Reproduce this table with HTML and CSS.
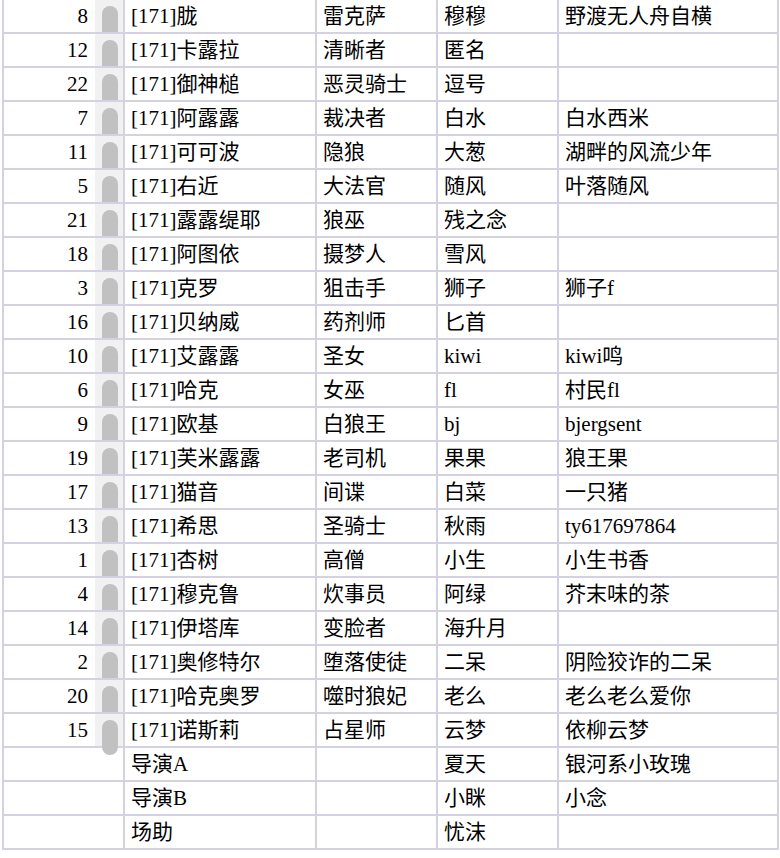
FILE: index.html
```html
<!DOCTYPE html>
<html>
<head>
<meta charset="utf-8">
<title>名单</title>
<link rel="stylesheet" href="styles.css">
</head>
<body>
<table class="roster">
  <colgroup>
    <col class="c-no"><col class="c-name"><col class="c-role"><col class="c-nick"><col class="c-note">
  </colgroup>
  <tbody>
    <tr><td class="no"><div class="no-wrap"><span class="num">8</span><span class="track"><span class="thumb"></span></span></div></td><td><span class="tag">[171]</span>胧</td><td>雷克萨</td><td>穆穆</td><td>野渡无人舟自横</td></tr>
    <tr><td class="no"><div class="no-wrap"><span class="num">12</span><span class="track"><span class="thumb"></span></span></div></td><td><span class="tag">[171]</span>卡露拉</td><td>清晰者</td><td>匿名</td><td></td></tr>
    <tr><td class="no"><div class="no-wrap"><span class="num">22</span><span class="track"><span class="thumb"></span></span></div></td><td><span class="tag">[171]</span>御神槌</td><td>恶灵骑士</td><td>逗号</td><td></td></tr>
    <tr><td class="no"><div class="no-wrap"><span class="num">7</span><span class="track"><span class="thumb"></span></span></div></td><td><span class="tag">[171]</span>阿露露</td><td>裁决者</td><td>白水</td><td>白水西米</td></tr>
    <tr><td class="no"><div class="no-wrap"><span class="num">11</span><span class="track"><span class="thumb"></span></span></div></td><td><span class="tag">[171]</span>可可波</td><td>隐狼</td><td>大葱</td><td>湖畔的风流少年</td></tr>
    <tr><td class="no"><div class="no-wrap"><span class="num">5</span><span class="track"><span class="thumb"></span></span></div></td><td><span class="tag">[171]</span>右近</td><td>大法官</td><td>随风</td><td>叶落随风</td></tr>
    <tr><td class="no"><div class="no-wrap"><span class="num">21</span><span class="track"><span class="thumb"></span></span></div></td><td><span class="tag">[171]</span>露露缇耶</td><td>狼巫</td><td>残之念</td><td></td></tr>
    <tr><td class="no"><div class="no-wrap"><span class="num">18</span><span class="track"><span class="thumb"></span></span></div></td><td><span class="tag">[171]</span>阿图依</td><td>摄梦人</td><td>雪风</td><td></td></tr>
    <tr><td class="no"><div class="no-wrap"><span class="num">3</span><span class="track"><span class="thumb"></span></span></div></td><td><span class="tag">[171]</span>克罗</td><td>狙击手</td><td>狮子</td><td>狮子f</td></tr>
    <tr><td class="no"><div class="no-wrap"><span class="num">16</span><span class="track"><span class="thumb"></span></span></div></td><td><span class="tag">[171]</span>贝纳威</td><td>药剂师</td><td>匕首</td><td></td></tr>
    <tr><td class="no"><div class="no-wrap"><span class="num">10</span><span class="track"><span class="thumb"></span></span></div></td><td><span class="tag">[171]</span>艾露露</td><td>圣女</td><td>kiwi</td><td>kiwi鸣</td></tr>
    <tr><td class="no"><div class="no-wrap"><span class="num">6</span><span class="track"><span class="thumb"></span></span></div></td><td><span class="tag">[171]</span>哈克</td><td>女巫</td><td>fl</td><td>村民fl</td></tr>
    <tr><td class="no"><div class="no-wrap"><span class="num">9</span><span class="track"><span class="thumb"></span></span></div></td><td><span class="tag">[171]</span>欧基</td><td>白狼王</td><td>bj</td><td>bjergsent</td></tr>
    <tr><td class="no"><div class="no-wrap"><span class="num">19</span><span class="track"><span class="thumb"></span></span></div></td><td><span class="tag">[171]</span>芙米露露</td><td>老司机</td><td>果果</td><td>狼王果</td></tr>
    <tr><td class="no"><div class="no-wrap"><span class="num">17</span><span class="track"><span class="thumb"></span></span></div></td><td><span class="tag">[171]</span>猫音</td><td>间谍</td><td>白菜</td><td>一只猪</td></tr>
    <tr><td class="no"><div class="no-wrap"><span class="num">13</span><span class="track"><span class="thumb"></span></span></div></td><td><span class="tag">[171]</span>希思</td><td>圣骑士</td><td>秋雨</td><td>ty617697864</td></tr>
    <tr><td class="no"><div class="no-wrap"><span class="num">1</span><span class="track"><span class="thumb"></span></span></div></td><td><span class="tag">[171]</span>杏树</td><td>高僧</td><td>小生</td><td>小生书香</td></tr>
    <tr><td class="no"><div class="no-wrap"><span class="num">4</span><span class="track"><span class="thumb"></span></span></div></td><td><span class="tag">[171]</span>穆克鲁</td><td>炊事员</td><td>阿绿</td><td>芥末味的茶</td></tr>
    <tr><td class="no"><div class="no-wrap"><span class="num">14</span><span class="track"><span class="thumb"></span></span></div></td><td><span class="tag">[171]</span>伊塔库</td><td>变脸者</td><td>海升月</td><td></td></tr>
    <tr><td class="no"><div class="no-wrap"><span class="num">2</span><span class="track"><span class="thumb"></span></span></div></td><td><span class="tag">[171]</span>奥修特尔</td><td>堕落使徒</td><td>二呆</td><td>阴险狡诈的二呆</td></tr>
    <tr><td class="no"><div class="no-wrap"><span class="num">20</span><span class="track"><span class="thumb"></span></span></div></td><td><span class="tag">[171]</span>哈克奥罗</td><td>噬时狼妃</td><td>老么</td><td>老么老么爱你</td></tr>
    <tr><td class="no"><div class="no-wrap"><span class="num">15</span><span class="track"><span class="thumb thumb-end"></span></span></div></td><td><span class="tag">[171]</span>诺斯莉</td><td>占星师</td><td>云梦</td><td>依柳云梦</td></tr>
    <tr><td class="no"></td><td>导演<span class="tag">A</span></td><td></td><td>夏天</td><td>银河系小玫瑰</td></tr>
    <tr><td class="no"></td><td>导演<span class="tag">B</span></td><td></td><td>小眯</td><td>小念</td></tr>
    <tr><td class="no"></td><td>场助</td><td></td><td>忧沫</td><td></td></tr>
  </tbody>
</table>
</body>
</html>
```

FILE: styles.css
```css
html, body {
  margin: 0;
  padding: 0;
  background: #fff;
}

body {
  font-family: "Liberation Serif", "Noto Sans CJK SC", serif;
  font-size: 21px;
  color: #000;
}

.tag {
  font-family: "Liberation Serif", serif;
}

.roster {
  border-collapse: separate;
  border-spacing: 0;
  table-layout: fixed;
  width: 777px;
  margin: -2px 0 0 2px;
  border-top: 2px solid #d3d1e2;
  border-left: 2px solid #d3d1e2;
}

.c-no { width: 121px; }
.c-name { width: 192px; }
.c-role { width: 121px; }
.c-nick { width: 121px; }
.c-note { width: 220px; }

.roster td {
  box-sizing: border-box;
  height: 34px;
  padding: 0 0 0 6px;
  border-right: 2px solid #d3d1e2;
  border-bottom: 2px solid #d3d1e2;
  vertical-align: middle;
  white-space: nowrap;
  overflow: visible;
  line-height: 24px;
}

.roster td.no {
  padding: 0;
}

.no-wrap {
  display: flex;
  height: 32px;
  align-items: stretch;
}

.num {
  flex: 1;
  text-align: right;
  padding-right: 7px;
  line-height: 32px;
}

.track {
  width: 28px;
  background: #f1f1f1;
  display: flex;
  justify-content: center;
  padding-top: 6px;
  box-sizing: border-box;
}

.thumb {
  display: block;
  width: 16px;
  height: 26px;
  margin-left: 1px;
  background: #c1c1c1;
  border-radius: 8px 8px 0 0;
}

.thumb-end {
  position: relative;
  height: 35px;
  border-radius: 8px;
}
```
